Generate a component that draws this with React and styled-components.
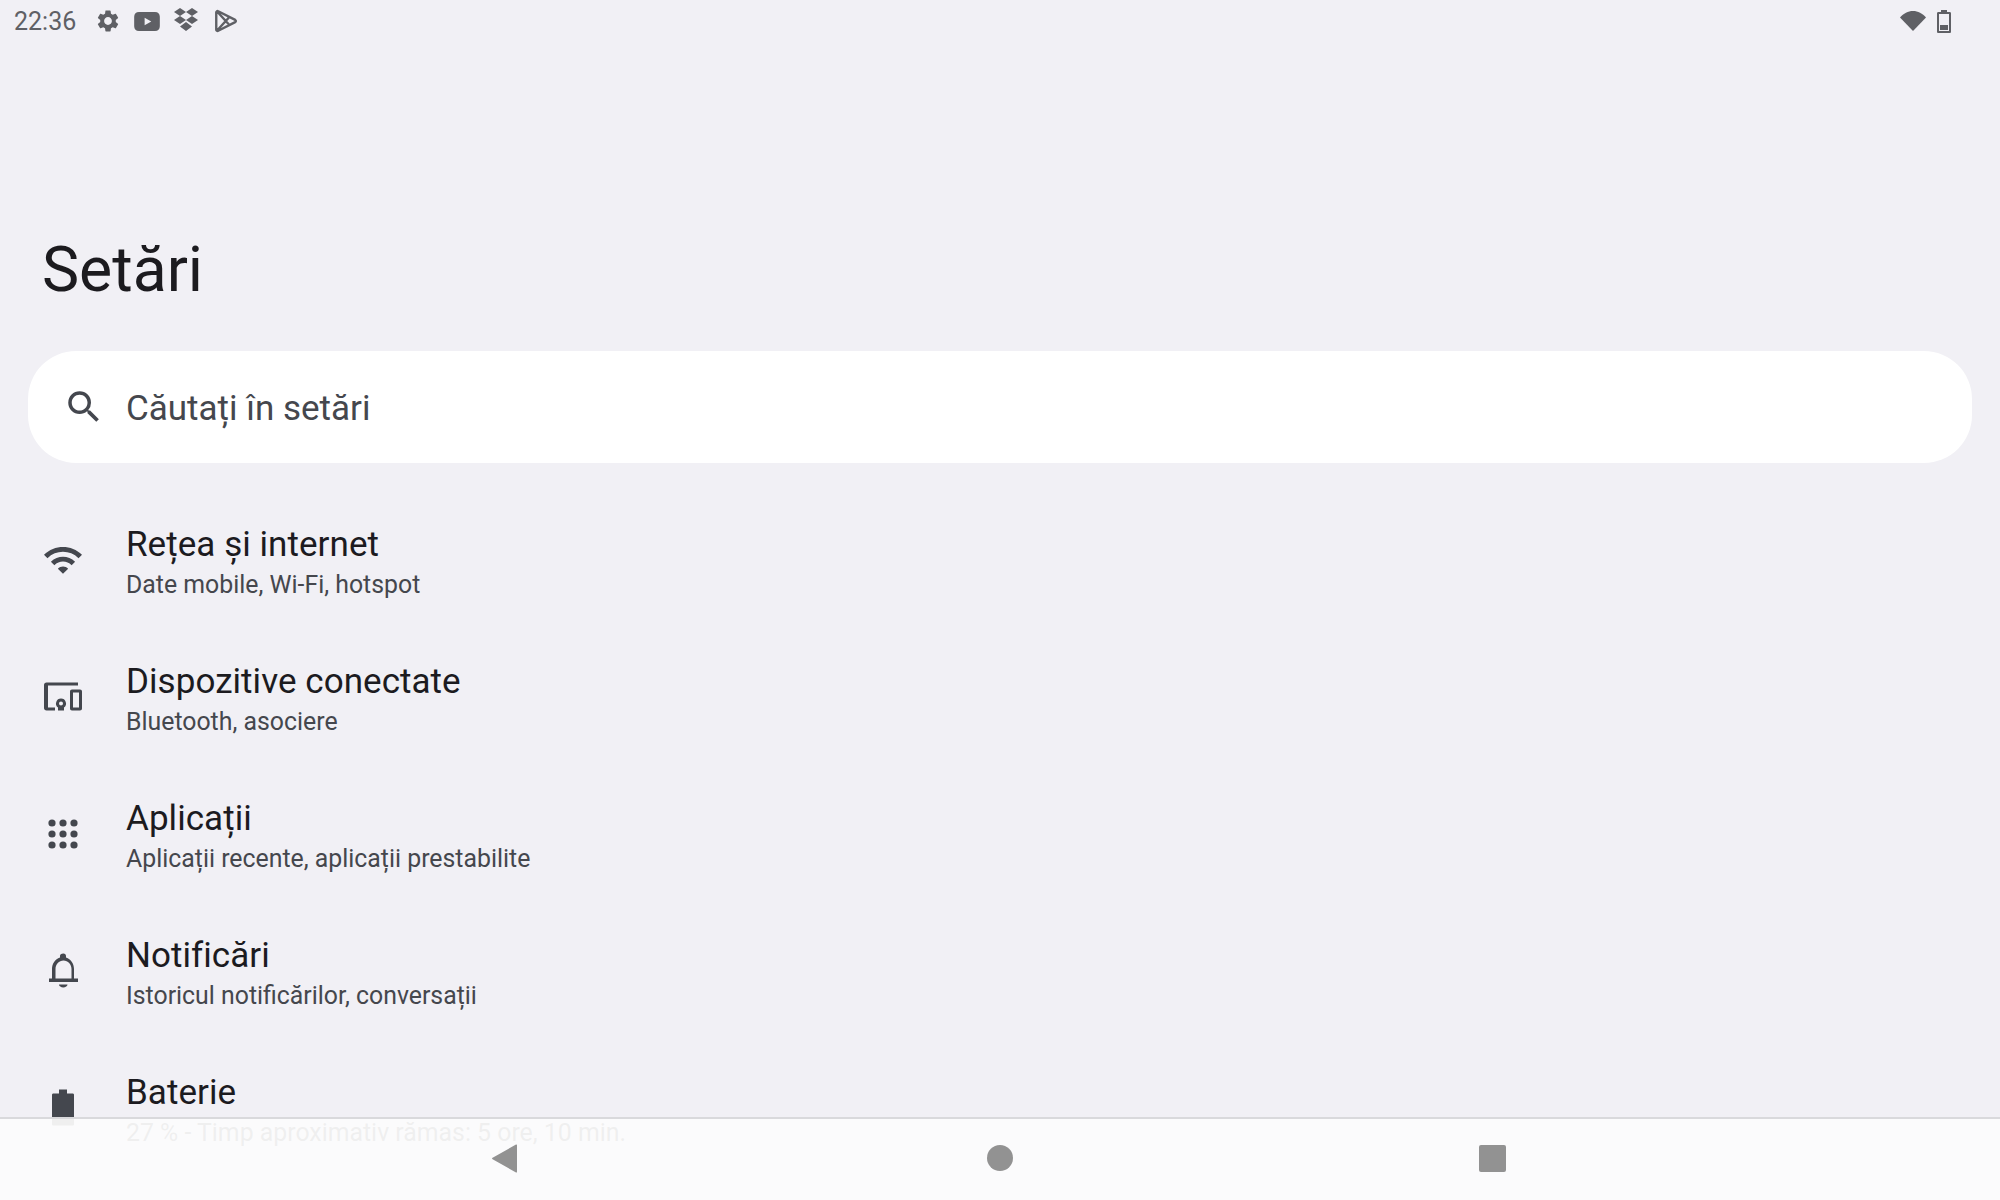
import React from 'react'
import styled, { createGlobalStyle } from 'styled-components'

const GlobalStyle = createGlobalStyle`
  html, body { margin: 0; padding: 0; background: #f1f0f5; }
  body { font-family: Roboto, "Noto Sans", sans-serif; overflow: hidden; }
`

const settings = [
  { title: 'Rețea și internet', sub: 'Date mobile, Wi-Fi, hotspot', icon: 'wifi' },
  { title: 'Dispozitive conectate', sub: 'Bluetooth, asociere', icon: 'devices' },
  { title: 'Aplicații', sub: 'Aplicații recente, aplicații prestabilite', icon: 'apps' },
  { title: 'Notificări', sub: 'Istoricul notificărilor, conversații', icon: 'bell' },
  { title: 'Baterie', sub: '27 % - Timp aproximativ rămas: 5 ore, 10 min.', icon: 'battery' },
]

const WifiGlyph = () => (
  <RowSvg viewBox="-1.9 -1.9 27.8 27.8">
    <path d="M1 9l2 2c4.970-4.970 13.030-4.970 18 0l2-2C16.930 2.930 7.080 2.930 1 9zm8 8l3 3 3-3c-1.650-1.660-4.340-1.660-6 0zm-4-4l2 2c2.760-2.760 7.240-2.760 10 0l2-2C15.140 9.140 8.870 9.140 5 13z" />
  </RowSvg>
)

const DevicesGlyph = () => (
  <RowSvg viewBox="0 0 48 48">
    <path d="M7.500 9.500H39v3H9v22h7v3H7.500C6 37.500 5 36.500 5 35V12c0-1.500 1-2.500 2.500-2.500z" />
    <path fillRule="evenodd" d="M22 25.500a5 5 0 0 1 3 9v3h-6v-3a5 5 0 0 1 3-9zm0 3a2 2 0 1 0 0 4 2 2 0 0 0 0-4z" />
    <path fillRule="evenodd" d="M33 16.500h8c1.200 0 2 .8 2 2v17c0 1.200-.8 2-2 2h-8c-1.200 0-2-.8-2-2v-17c0-1.200.8-2 2-2zm1 3v15h6v-15z" />
  </RowSvg>
)

const AppsGlyph = () => (
  <RowSvg viewBox="0 0 48 48">
    {[13, 24, 35].map(cy =>
      [13, 24, 35].map(cx => <circle key={`${cx}-${cy}`} cx={cx} cy={cy} r="3.6" />)
    )}
  </RowSvg>
)

const BellGlyph = () => (
  <RowSvg viewBox="0 0 48 48">
    <path fillRule="evenodd" d="M24.500 6.500c1.500 0 2.500 1 2.500 2.500v1.500c5 1.500 8 6.500 8 11.500v9.500h4v3.500H10v-3.500h3V22c0-5 3-10 8-11.500V9c0-1.500 1-2.500 3.500-2.500zM16.500 31.500h16V22c0-4.500-3.500-8.500-8-8.500s-8 4-8 8.500z" />
    <path d="M20 37.500h8.500c0 1.600-2 3-4.250 3S20 39.100 20 37.500z" />
  </RowSvg>
)

const BatteryGlyph = () => (
  <RowSvg viewBox="0 0 48 48">
    <path d="M20 5.500h8v4h5.500c1 0 1.500.5 1.500 1.500v29c0 1-.5 1.500-1.500 1.500h-19c-1 0-1.500-.5-1.500-1.500V11c0-1 .5-1.500 1.500-1.500H20z" />
  </RowSvg>
)

const rowGlyphs = {
  wifi: WifiGlyph,
  devices: DevicesGlyph,
  apps: AppsGlyph,
  bell: BellGlyph,
  battery: BatteryGlyph,
}

const SettingRow = ({ title, sub, icon }) => {
  const Glyph = rowGlyphs[icon]
  return (
    <Row>
      <Glyph />
      <RowText>
        <RowTitle>{title}</RowTitle>
        <RowSub>{sub}</RowSub>
      </RowText>
    </Row>
  )
}

export default function App() {
  return (
    <Screen>
      <GlobalStyle />
      <StatusBar>
        <StatusLeft>
          <Clock>22:36</Clock>
          <StatusIcon $w={26} $h={26} viewBox="0 0 24 24">
            <path d="M19.140 12.940c.04-.3.06-.61.06-.94 0-.32-.02-.64-.07-.94l2.030-1.580a.49.49 0 0 0 .12-.61l-1.920-3.320a.488.488 0 0 0-.59-.22l-2.390.96c-.5-.38-1.030-.7-1.620-.94l-.36-2.540a.484.484 0 0 0-.48-.41h-3.840c-.24 0-.43.17-.47.41l-.36 2.540c-.59.24-1.130.57-1.620.94l-2.390-.96c-.22-.08-.47 0-.59.22L2.740 8.870c-.12.21-.08.47.12.61l2.030 1.580c-.05.3-.09.63-.09.94s.02.64.07.94l-2.030 1.580a.49.49 0 0 0-.12.61l1.920 3.320c.12.22.37.29.59.22l2.390-.96c.5.38 1.030.7 1.620.94l.36 2.540c.05.24.24.41.48.41h3.840c.24 0 .44-.17.47-.41l.36-2.540c.59-.24 1.130-.56 1.620-.94l2.390.96c.22.08.47 0 .59-.22l1.920-3.320c.12-.22.07-.47-.12-.61l-2.010-1.580zM12 15.600c-1.980 0-3.600-1.620-3.600-3.600s1.620-3.600 3.600-3.600 3.600 1.620 3.600 3.600-1.620 3.600-3.600 3.600z" />
          </StatusIcon>
          <StatusIcon $w={26} $h={19} viewBox="0 0 27 20">
            <path fillRule="evenodd" d="M5 0h17c3 0 5 2 5 5v10c0 3-2 5-5 5H5c-3 0-5-2-5-5V5c0-3 2-5 5-5zm6 6v8l7-4z" />
          </StatusIcon>
          <DropboxIcon $w={26} $h={24} viewBox="0 0 26 24">
            <path d="M7 0l6 4-6 4-6-4zM19 0l6 4-6 4-6-4zM7 8l6 4-6 4-6-4zM19 8l6 4-6 4-6-4zM13 14l6 4.500-6 4.500-6-4.500z" />
          </DropboxIcon>
          <PlayIcon $w={26} $h={26} viewBox="0 0 24 24">
            <path d="M3 4c0-1 1-1.500 1.800-1l15.700 8c.8.500.8 1.500 0 2L4.800 21c-.8.500-1.800 0-1.800-1zM4 3.500L14.500 15M4 20.500L14.500 9" />
          </PlayIcon>
        </StatusLeft>
        <StatusRight>
          <StatusIcon $w={26} $h={20} viewBox="0 0 26 20">
            <path d="M0 6.500C3.500 2.500 8 0 13 0s9.500 2.500 13 6.500L13 20z" />
          </StatusIcon>
          <StatusIcon $w={14} $h={23} viewBox="0 0 14 23">
            <path fillRule="evenodd" d="M4 0h6v2h2.500c1 0 1.500.5 1.500 1.500v18c0 1-.5 1.500-1.500 1.500h-11C.5 23 0 22.500 0 21.500v-18C0 2.500.5 2 1.500 2H4zM2 4v17h10V4z" />
            <rect x="3" y="15" width="8" height="5" />
          </StatusIcon>
        </StatusRight>
      </StatusBar>

      <PageTitle>Setări</PageTitle>

      <SearchBar>
        <SearchIcon viewBox="0 0 24 24">
          <path d="M15.500 14h-.79l-.28-.27A6.471 6.471 0 0 0 16 9.500 6.500 6.500 0 1 0 9.500 16c1.610 0 3.090-.59 4.230-1.570l.27.28v.79l5 4.990L20.490 19l-4.990-5zm-6 0C7.010 14 5 11.990 5 9.500S7.010 5 9.500 5 14 7.010 14 9.500 11.990 14 9.500 14z" />
        </SearchIcon>
        <SearchLabel>Căutați în setări</SearchLabel>
      </SearchBar>

      <SettingsList>
        {settings.map(item => (
          <SettingRow key={item.title} {...item} />
        ))}
      </SettingsList>

      <NavBar>
        <BackButton viewBox="0 0 25 29">
          <path d="M24 .5c.6-.3 1 0 1 .8v26.400c0 .8-.4 1.100-1 .8L.6 15.200c-.8-.4-.8-1 0-1.400z" />
        </BackButton>
        <HomeButton />
        <RecentsButton />
      </NavBar>
    </Screen>
  )
}

// STYLED COMPONENTS /////////////////////

const Screen = styled.div`
  position: relative;
  width: 2000px;
  height: 1200px;
  overflow: hidden;
  background: #f1f0f5;
`

const StatusBar = styled.div`
  height: 42px;
  display: flex;
  align-items: center;
  justify-content: space-between;
  padding: 0 49px 0 14px;
  color: #5f6065;
`

const StatusLeft = styled.div`
  display: flex;
  align-items: center;
  gap: 13px;
`

const StatusRight = styled.div`
  display: flex;
  align-items: center;
  gap: 11px;
`

const Clock = styled.span`
  font-size: 25px;
  width: 68px;
`

const StatusIcon = styled.svg`
  width: ${p => p.$w}px;
  height: ${p => p.$h}px;
  fill: #5f6065;
  flex: none;
`

const DropboxIcon = styled(StatusIcon)`
  margin-top: -3px;
  margin-right: 1px;
`

const PlayIcon = styled(StatusIcon)`
  fill: none;
  stroke: #5f6065;
  stroke-width: 2.2;
  stroke-linejoin: round;
`

const PageTitle = styled.h1`
  margin: 190px 0 0 42px;
  font-size: 62.5px;
  line-height: 75px;
  font-weight: 400;
  color: #1c1b1f;
`

const SearchBar = styled.div`
  margin: 44px 28px 0;
  height: 112px;
  border-radius: 48px;
  background: #ffffff;
  display: flex;
  align-items: center;
  padding-left: 35px;
  gap: 21px;
`

const SearchIcon = styled.svg`
  width: 42px;
  height: 42px;
  fill: #44474e;
  flex: none;
`

const SearchLabel = styled.span`
  font-size: 35px;
  color: #45474d;
  position: relative;
  top: 1px;
`

const SettingsList = styled.div`
  margin-top: 32px;
  display: flex;
  flex-direction: column;
`

const Row = styled.div`
  height: 137px;
  display: flex;
  align-items: center;
  padding-left: 39px;
  gap: 40px;
`

const RowSvg = styled.svg`
  width: 48px;
  height: 48px;
  fill: #44474e;
  flex: none;
  margin-top: -8px;
`

const RowText = styled.div`
  display: flex;
  flex-direction: column;
  margin-left: -1px;
  margin-top: -1px;
`

const RowTitle = styled.div`
  font-size: 35px;
  line-height: 44px;
  letter-spacing: 0.05px;
  color: #1c1b1f;
`

const RowSub = styled.div`
  font-size: 24.85px;
  line-height: 36px;
  color: #45474d;
`

const NavBar = styled.div`
  position: absolute;
  left: 0;
  right: 0;
  bottom: 0;
  height: 83px;
  box-sizing: border-box;
  border-top: 2px solid #d9d9dc;
  background: rgba(252, 252, 252, 0.93);
`

const BackButton = styled.svg`
  position: absolute;
  left: 492px;
  top: 25px;
  width: 25px;
  height: 29px;
  fill: #929292;
`

const HomeButton = styled.div`
  position: absolute;
  left: 987px;
  top: 26px;
  width: 26px;
  height: 26px;
  border-radius: 50%;
  background: #929292;
`

const RecentsButton = styled.div`
  position: absolute;
  left: 1479px;
  top: 26px;
  width: 27px;
  height: 27px;
  border-radius: 2px;
  background: #929292;
`
